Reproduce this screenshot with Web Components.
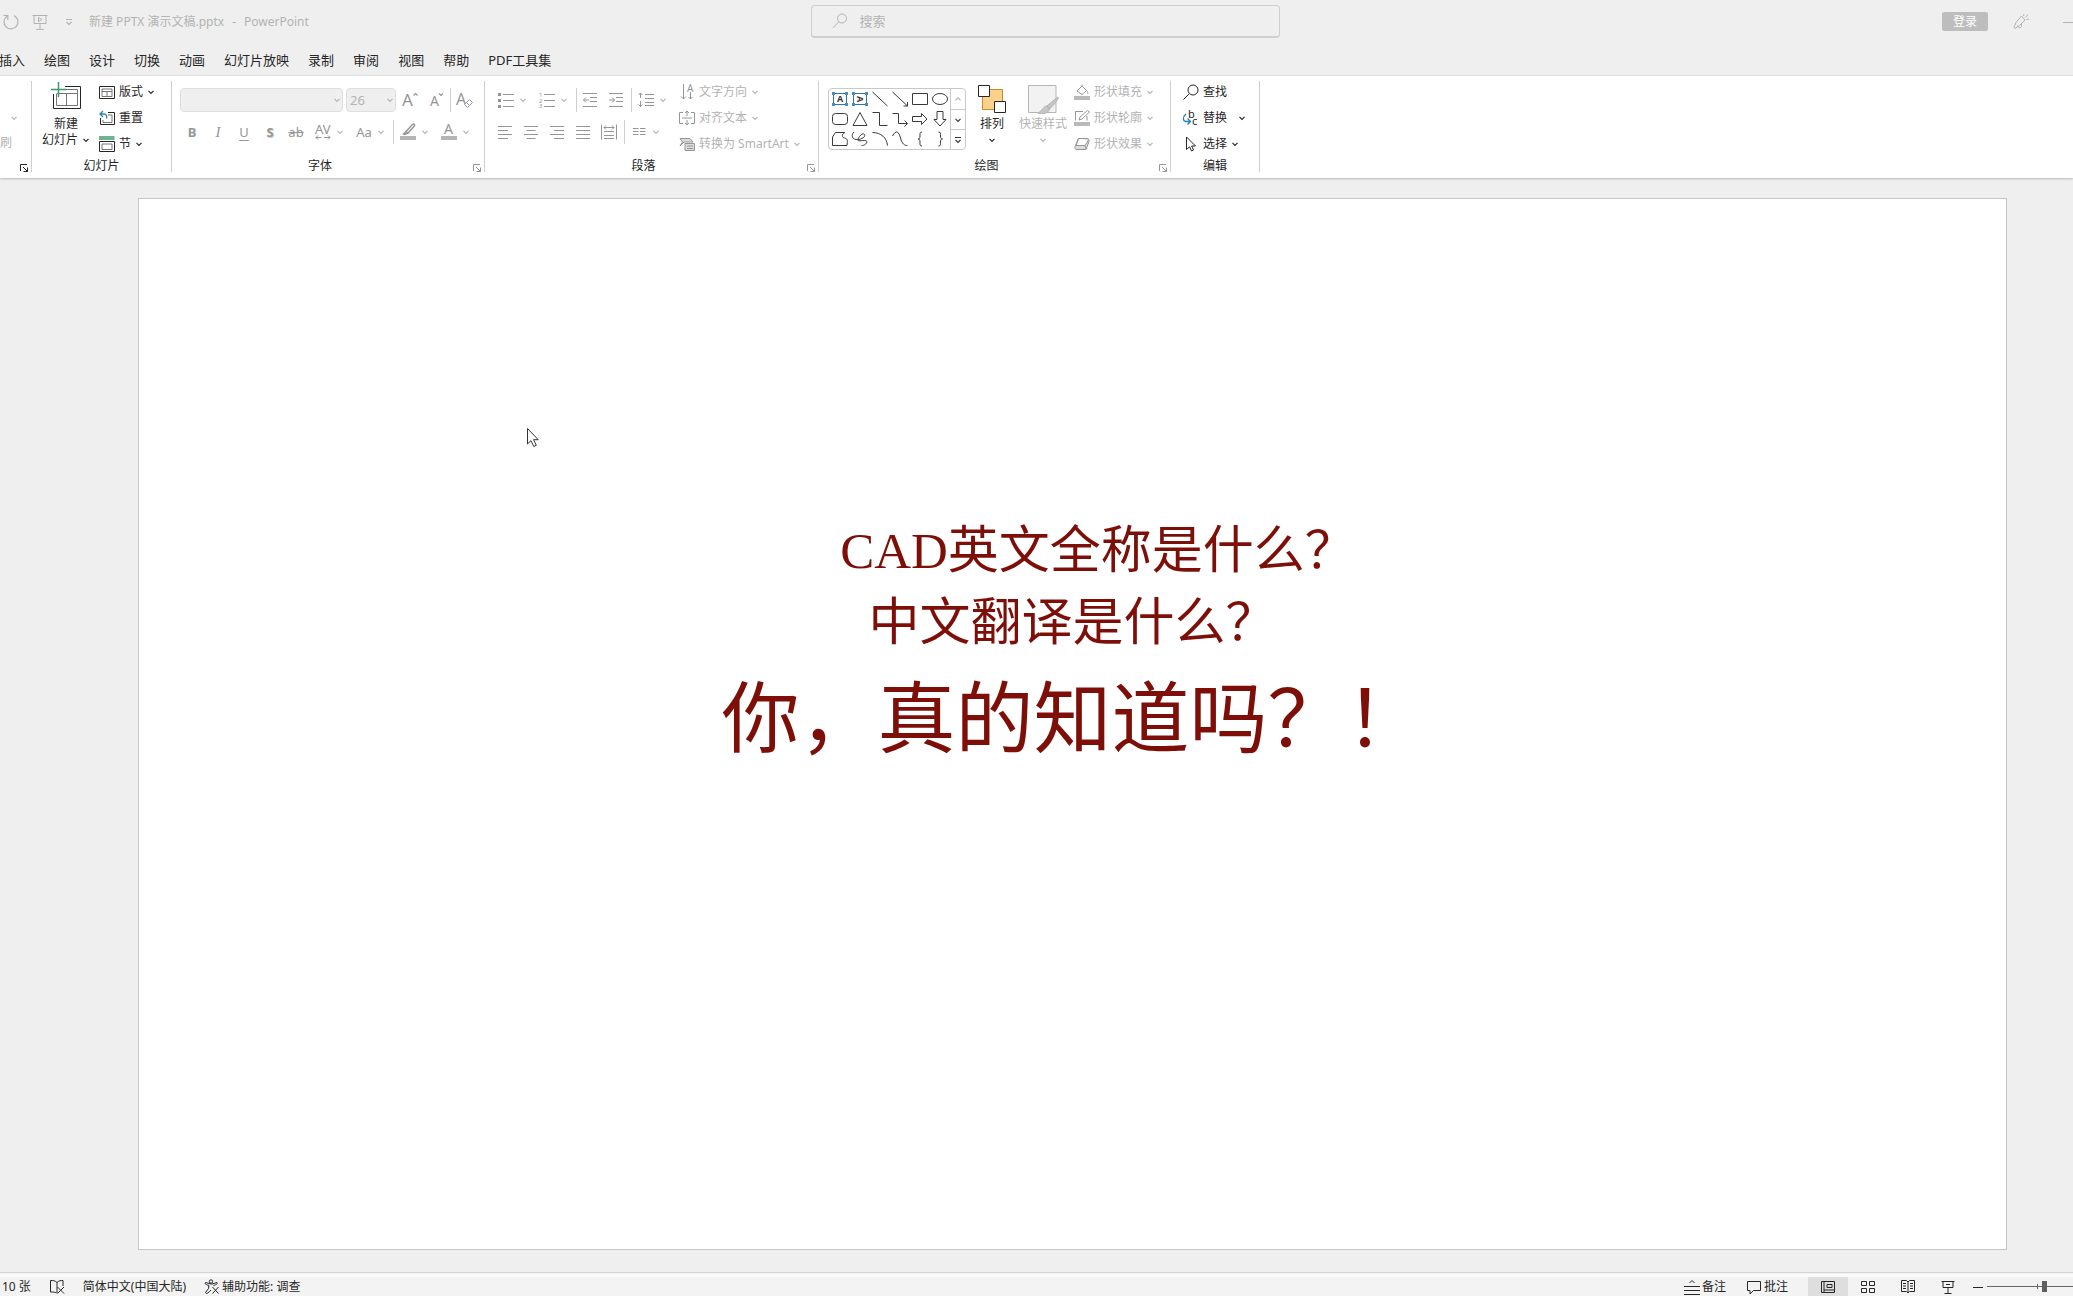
<!DOCTYPE html>
<html lang="zh-CN">
<head>
<meta charset="utf-8">
<meta name="viewport" content="width=device-width, initial-scale=1">
<title>新建 PPTX 演示文稿.pptx - PowerPoint</title>
<style>
  html, body { margin: 0; height: 100%; overflow: hidden; }
  body {
    --ink: #262626;
    --dim: #b3b3b3;
    --mute: #969696;
    --chrome: #efefef;
    font: 12px/16px "Noto Sans", "Noto Sans CJK SC", sans-serif;
    color: var(--ink);
    background: var(--chrome);
  }
</style>
</head>
<body>
<ppt-app></ppt-app>
<script>
/* Icon drawings: [viewBox width, viewBox height, markup] */
const ICONS = {
  chevron: [8, 8, '<path d="M1.5 2.8 4 5.3 6.5 2.8" stroke-width="1.2"/>'],
  up: [8, 8, '<path d="M1.5 5.3 4 2.8 6.5 5.3" stroke-width="1.2"/>'],
  more: [10, 10, '<path d="M2 2.5H8M2.5 5 5 7.5 7.5 5" stroke-width="1.2"/>'],
  redo: [18, 18, '<path d="M12 2.6A7 7 0 1 1 5 3.2M1.5 2.5H5.8V7" stroke-width="1.2"/>'],
  present: [16, 16, '<path d="M.5 1.5H15.5M2 1.5V9.5H14V1.5M8 9.5V15M4 15.4H12"/><path d="M6.5 3.5 10 5.5 6.5 7.5Z"/>'],
  search: [16, 16, '<circle cx="10" cy="5.5" r="4.5"/><path d="M6.8 8.8 1 14.8"/>'],
  pen: [18, 18, '<path d="M9.5 3 13 7 7.5 12.5 3 15.5 2 14.5 4 9.5ZM5.5 12.5C7 16 10 15.5 9.5 11M11.5 3 12 1M13.5 4.5 16 1.5M14.5 6.5 17 6"/>'],
  minus: [10, 10, '<path d="M0 5.5H10"/>'],
  launcher: [10, 10, '<path d="M1.5 8V1.5H8M4 4 8.5 8.5M8.5 4.5V8.5H4.5"/>'],
  newslide: [32, 32, '<path d="M15 4.5H30.5V26.5H3.5V12"/><path d="M15 7.5H27.5V23.5H6.5V12M6.5 11.5H27.5M16.5 11.5V23.5" stroke="#767676"/><path d="M8.5 0V15M1 7.5H16" stroke="#3e9b6e" stroke-width="1.5"/>'],
  layout: [16, 16, '<path d="M.5 2.5H15.5V14.5H.5Z"/><path d="M3 5H13V12.5H3ZM3 7.5H13M8 7.5V12.5" stroke="#767676"/>'],
  reset: [16, 16, '<path d="M9 2.5H15.5V14.5H1.5V8"/><path d="M9 5H13V12.5H4V10" stroke="#767676"/><path d="M4 1 1 4 4 7M1 4H5C7.5 4 8 6 7.5 8.5" stroke="#2f83b4" stroke-width="1.3"/>'],
  section: [16, 16, '<path d="M0 1H15.5M0 3H15.5" stroke="#3e9b6e" stroke-width="1.3"/><path d="M.5 5.5H15.5V15.5H.5Z"/><path d="M3 8H13V13.5H3Z" stroke="#767676"/>'],
  grow: [18, 18, '<text x="2" y="15" font-size="17">A</text><path d="M13.5 4.5 15.5 2.5 17.5 4.5" stroke-width="1.2"/>'],
  shrink: [18, 18, '<text x="4" y="15" font-size="14">A</text><path d="M13 2.5 15 4.5 17 2.5" stroke-width="1.2"/>'],
  clear: [18, 18, '<text x="1" y="14" font-size="16">A</text><path d="M9.5 13.5 14.5 8.5 17.5 11.5 12.5 16.5ZM11.5 11.5 14.5 14.5" fill="#fff"/>'],
  spacing: [16, 18, '<text x="0" y="11" font-size="13">AV</text><path d="M1 14.5H6.5M3 12.5 1 14.5 3 16.5M9 14.5H15M13 12.5 15 14.5 13 16.5"/>'],
  marker: [16, 18, '<path d="M6 8.5 12.5 1.5C14 .5 15.500 2 14 3.500L8 10ZM6 8.500 8 10 4.500 11.500 3.500 11Z" stroke-width="1.5"/><path d="M0 15H16" stroke-width="4" stroke="#b5b5b5"/>'],
  fontcolor: [16, 18, '<text x="3" y="11" font-size="14">A</text><path d="M0 15H16" stroke-width="4" stroke="#b5b5b5"/>'],
  bullets: [16, 16, '<path d="M0 2.5H3M0 8.5H3M0 14.5H3" stroke-width="3"/><path d="M5 2.5H16M5 8.5H16M5 14.5H16"/>'],
  numbers: [16, 16, '<g font-size="6"><text x="0" y="4.5">1</text><text x="0" y="10.5">2</text><text x="0" y="16">3</text></g><path d="M5 2.5H16M5 8.5H16M5 14.5H16"/>'],
  outdent: [16, 16, '<path d="M1 1.5H15M8 5.5H15M8 9.5H15M1 14.5H15M1.5 8H7M4 5.5 1.5 8 4 10.5"/>'],
  indent: [16, 16, '<path d="M1 1.5H15M8 5.5H15M8 9.5H15M1 14.5H15M1 8H6.5M4 5.5 6.5 8 4 10.5"/>'],
  linegap: [16, 16, '<path d="M7 2.5H16M7 6.5H16M7 10.5H16M7 13.5H16M2.5 1V6M.5 3 2.5 1 4.5 3M2.5 9V14.5M.5 12.5 2.5 14.5 4.5 12.5"/>'],
  left: [16, 16, '<path d="M1 2.5H15M1 6.5H11M1 10.5H15M1 14.5H11"/>'],
  center: [16, 16, '<path d="M1 2.5H15M3.5 6.5H12.5M1 10.5H15M3.5 14.5H12.5"/>'],
  right: [16, 16, '<path d="M1 2.5H15M5 6.5H15M1 10.5H15M5 14.5H15"/>'],
  justify: [16, 16, '<path d="M1 2.5H15M1 6.5H15M1 10.5H15M1 14.5H15"/>'],
  distribute: [16, 16, '<path d="M.5 .5V15.5M15.5 .5V15.5M3 7.5H13M3 11.5H13M3 14.5H13M3 3.5H13M5 1.5 3 3.5 5 5.5M11 1.5 13 3.5 11 5.5"/>'],
  columns: [16, 16, '<path d="M2 4.5H7.5M9 4.5H14.5M2 7.5H7.5M9 7.5H14.5M2 10.5H7.5M9 10.5H14.5"/>'],
  direction: [16, 16, '<path d="M4.5 0V15M2 12.5 4.5 15 7 12.5M11.5 8V15M9.5 13 11.5 15 13.5 13"/><text x="8" y="8" font-size="10">A</text>'],
  aligntext: [16, 16, '<path d="M4 2.5H.5V13.5H4M12 2.5H15.5V13.5H12M3 8H13M8 1V6M6 3 8 1 10 3M8 10V15M6 13 8 15 10 13"/>'],
  smartart: [16, 16, '<path d="M1 2.5H11L14 6H5L1 10 3.5 6ZM6 7.5H15.5V14.5H6ZM8 10H14M8 12.5H14" fill="#ddd"/>'],
  tbox: [16, 16, '<path d="M1.5 2.5H14.5V13.5H1.5Z" stroke="#2e75a8"/><path d="M0 1h3v3H0ZM13 1h3v3H13ZM0 12h3v3H0ZM13 12h3v3H13Z" fill="#4d8cb8" stroke="none"/><text x="5" y="11" font-size="9" font-weight="700" fill="#2e75a8">A</text>'],
  vbox: [16, 16, '<path d="M1.5 2.5H14.5V13.5H1.5Z" stroke="#2e75a8"/><path d="M0 1h3v3H0ZM13 1h3v3H13ZM0 12h3v3H0ZM13 12h3v3H13Z" fill="#4d8cb8" stroke="none"/><text x="5" y="11" font-size="9" font-weight="700" fill="#2e75a8" transform="rotate(90 8 8)">A</text>'],
  line: [16, 16, '<path d="M.5 1 15.5 15"/>'],
  arrow: [16, 16, '<path d="M.5 1 15.5 15M15.5 11V15H11.5"/>'],
  rect: [16, 16, '<path d="M.5 2.5H15.5V13.5H.5Z"/>'],
  ellipse: [16, 16, '<ellipse cx="8" cy="8" rx="7.5" ry="5.5"/>'],
  round: [16, 16, '<rect x=".5" y="2.5" width="15" height="11" rx="3"/>'],
  triangle: [16, 16, '<path d="M8 1.5 15 14.5H1Z"/>'],
  elbow: [16, 16, '<path d="M.5 1.5H7.5V14.5H15.5"/>'],
  elbowarrow: [16, 16, '<path d="M.5 2.5H6.5V12.5H15.5M12.5 9.5 15.5 12.5 12.5 15.5"/>'],
  rarrow: [16, 16, '<path d="M.5 5.5H9.5V2.5L15 8 9.5 13.5V10.5H.5Z"/>'],
  darrow: [16, 16, '<path d="M5 .5H11V8.5H14L8 15 2 8.5H5Z"/>'],
  freeform: [16, 16, '<path d="M3.5 1.5H13C9 3 10 6.5 12.5 7 16 7.5 15.5 10 15 14.5H.5V6Z"/>'],
  scribble: [16, 16, '<path d="M2 1C-1 4 0 8 4 8.5 9 9 14 6 12.5 3.5 11 1 6 6 6 9 6 11 12 8.5 14.5 10 16 12 12 15 9.5 14.5"/>'],
  arc: [16, 16, '<path d="M.5 1.5C9 1.5 15 7 15.5 14.5"/>'],
  curve: [16, 16, '<path d="M.5 5C4-2 7 1 8.5 7 10 13 12.5 14.5 15.5 14.5"/>'],
  lbrace: [16, 16, '<path d="M10 1C7.5 1 8 3 8 5 8 7 7.5 8 6 8 7.5 8 8 9 8 11 8 13 7.5 15 10 15"/>'],
  rbrace: [16, 16, '<path d="M6.5 1C9 1 8.5 3 8.5 5 8.5 7 9 8 10.5 8 9 8 8.5 9 8.5 11 8.5 13 9 15 6.5 15"/>'],
  arrange: [32, 32, '<path d="M6.5 7.5H26.5V27.5H6.5Z" fill="#fbd18c" stroke="#c98a2c"/><path d="M2.5 3.5H13.5V14.5H2.5ZM18.5 19.5H29.5V30.5H18.5Z" fill="#fff"/>'],
  styles: [32, 32, '<path d="M1.5 3.5H29V30.5H1.5Z" fill="#f2f2f2" stroke="#b5b5b5"/><path d="M30.5 15 20 24 22.5 27C26 24 30 19 31.5 16ZM20 24C16 24 16 29 10.5 31 16 32.5 22 31 22.5 27Z" fill="#c6c6c6"/>'],
  fill: [16, 16, '<path d="M3 7 8 2 12.5 6.5 8 10.5ZM8 2V.5M12.5 6.5C14 8 14 9.5 13.5 10"/><path d="M0 14H16" stroke-width="4" stroke="#b9b9b9"/>'],
  outline: [16, 16, '<path d="M9 1.5H1.5V10.5M13 6V10.5M5 10 6 7 13.5 .5 15.5 2 8 9Z"/><path d="M0 14H16" stroke-width="4" stroke="#b9b9b9"/>'],
  effect: [16, 16, '<path d="M4.5 2.5H13C15 2.5 15.5 4 15 5.5L12 13.5H3C1 13.5 .5 12 1 10.5ZM4.5 2.5 2 9.5H11L14.5 4M11 9.5 12 13" fill="#dcdcdc"/>'],
  find: [16, 16, '<circle cx="10" cy="6" r="5"/><path d="M6.5 9.5 .5 15.5"/>'],
  replace: [16, 16, '<text x="5" y="8" font-size="11" fill="#b04aa0">b</text><text x="9" y="15" font-size="11" fill="#2a7fb8">c</text><path d="M3 4C-.5 7-.5 11 3 11.5H7M4.500 8.500 7.500 11.500 4.500 14.500" stroke="#2a7fb8" stroke-width="1.3"/>'],
  select: [16, 16, '<path d="M3.5 1V13.5L6.5 10.8 8.5 15 10.5 14 8.6 10H12.5Z"/>'],
  proof: [16, 16, '<path d="M8 3.5V14M8 3.5C6 1.5 4 1.5 1.5 1.5V13C4 13 6 13 7.5 14M8 3.5C10 1.5 12 1.5 14 1.5V7M8.5 8 15 14.5M15 8 8.5 14.5"/>'],
  access: [16, 16, '<circle cx="7" cy="2.5" r="1.7"/><path d="M7 5 1.5 3.5M1.5 3.5C0 5 3 6 5 6.5L4.5 9.5 1.5 13.5C2 15 3.5 15 7 11M7 5H8L13 3.5C14 5.5 11 6 9.5 6.5M8.5 8 14.5 14.5M14.5 8 8.5 14.5"/>'],
  notes: [16, 16, '<path d="M0 7.5H16M0 11.5H16M0 15.5H16M5.5 4 8 1.5 10.5 4"/>'],
  comment: [16, 16, '<path d="M1.5 2.5H14.5V11.5H7.5L4 15V11.5H1.5Z"/>'],
  normal: [16, 16, '<path d="M1.5 2.5H14.5V13.5H1.5ZM4 2.5V13.5M4 11H14.5M7 5.5H12V8.5H7Z"/>'],
  sorter: [16, 16, '<path d="M1.5 2.5H6.5V6.5H1.5ZM9.5 2.5H14.5V6.5H9.5ZM1.5 9.5H6.5V13.5H1.5ZM9.5 9.5H14.5V13.5H9.5Z"/>'],
  reading: [16, 16, '<path d="M8 3 6.5 1.5H1.5V12.5H6.5L8 14 9.5 12.5H14.5V1.5H9.5ZM8 3V14M3 4.5H6M3 7H6M3 9.5H6M10 4.5H13M10 7H13M10 9.5H13"/>'],
  show: [16, 16, '<path d="M1.5 2.5H14.5M3 2.5V8.5H13V2.5M8 8.5V14.5M4.5 14.5H11.5M6 5.5H10"/>'],
  cursor: [14, 22, '<path d="M1.5 1.5V17L5 13.7 7.8 19.5 10.3 18.3 7.6 12.7H12.2Z" fill="#fff" stroke="#333"/>']
};

/* Base: every element renders its own template into an open shadow root. */
class Part extends HTMLElement {
  connectedCallback() {
    if (this.shadowRoot) return;
    const t = document.createElement('template');
    t.innerHTML = `<style>*{box-sizing:border-box}button,select,input{font:inherit;color:inherit;margin:0;padding:0;border:0;background:none}${this.css()}</style>${this.html()}`;
    this.attachShadow({ mode: 'open' }).append(t.content.cloneNode(true));
  }
  css() { return ''; }
  html() { return '<slot></slot>'; }
}

customElements.define('ui-icon', class extends Part {
  css() {
    const [w, h] = ICONS[this.getAttribute('name')];
    return `:host{display:block;flex:none;width:${w}px;height:${h}px}svg{display:block;overflow:visible;fill:none;stroke:currentColor}text{fill:currentColor;stroke:none}`;
  }
  html() {
    const [w, h, d] = ICONS[this.getAttribute('name')];
    return `<svg width="${w}" height="${h}" viewBox="0 0 ${w} ${h}" aria-hidden="true">${d}</svg>`;
  }
});

const icon = n => `<ui-icon name="${n}"></ui-icon>`;

/* Icon-only ribbon button; "menu" adds a drop-down arrow. */
customElements.define('icon-button', class extends Part {
  css() { return `:host{display:block;flex:none;color:var(--mute)}
    button{display:flex;align-items:center;justify-content:center;width:26px;height:24px}
    .menu{width:41px;justify-content:flex-start;gap:5px;padding:0 6px}
    .face{display:flex;justify-content:center;width:16px}
    .menu ui-icon[name=chevron]{color:var(--dim)}`; }
  html() {
    const n = this.getAttribute('icon'), m = this.hasAttribute('menu');
    return `<button type="button" class="${m ? 'menu' : ''}" aria-label="${this.getAttribute('label') || ''}">${m ? '<span class="face">' : ''}${n ? icon(n) : '<slot></slot>'}${m ? '</span>' + icon('chevron') : ''}</button>`;
  }
});

/* One-line ribbon command: icon, label, optional arrow. */
customElements.define('row-button', class extends Part {
  css() { return `:host{display:block}:host([off]){color:var(--dim)}:host([off]) ui-icon{color:var(--mute)}:host([off]) ui-icon[name=chevron]{color:var(--dim)}
    button{display:flex;align-items:center;gap:4px;height:26px;padding:0 6px;white-space:nowrap}
    :host([split]) ui-icon[name=chevron]{margin-left:7px}`; }
  html() { return `<button type="button">${icon(this.getAttribute('icon'))}<span><slot></slot></span>${this.hasAttribute('menu') ? icon('chevron') : ''}</button>`; }
});

/* Tall ribbon command with a large icon. */
customElements.define('big-button', class extends Part {
  css() { return `:host{display:block;flex:none}:host([off]){color:var(--dim)}
    button{display:flex;flex-direction:column;align-items:center;width:100%;padding-top:3px;white-space:nowrap}
    span{display:flex;align-items:center;justify-content:center;gap:4px;height:16px}
    .a{margin-top:2px}`; }
  html() { return `<button type="button">${icon(this.getAttribute('icon'))}<span class="a"><slot></slot></span><span><slot name="second"></slot>${icon('chevron')}</span></button>`; }
});

customElements.define('ribbon-group', class extends Part {
  css() { return `:host{display:flex;flex-direction:column;flex:none;padding:3px 1px 0 0;background:linear-gradient(#cfcfcf,#cfcfcf) no-repeat right 5px/1px calc(100% - 11px)}
    .body{display:flex;height:77px}
    footer{display:flex;align-items:center;height:20px}
    h2{flex:1;margin:0;font-size:12px;font-weight:400;line-height:20px;text-align:center}
    button{width:16px;height:16px;padding:4px 0 0 4px;color:var(--launch,var(--mute))}`; }
  html() { return `<div class="body"><slot></slot></div><footer><h2>${this.getAttribute('label') || ''}</h2>${this.hasAttribute('launcher') ? `<button type="button" aria-label="更多选项">${icon('launcher')}</button>` : ''}</footer>`; }
});

customElements.define('title-bar', class extends Part {
  css() { return `:host{display:flex;align-items:center;height:43px;color:var(--dim)}
    .left{flex:1 1 17px;display:flex;align-items:center;min-width:0;padding-left:2px}
    .left button{display:block}
    .left button+button{margin-left:12px}
    .left button.q{margin-left:16px}
    h1{display:flex;gap:8px;margin:0 0 0 15px;font:inherit;white-space:nowrap}
    label{display:flex;align-items:center;gap:12px;flex:0 1 469px;height:33px;padding:0 20px;border:1px solid #cecece;border-bottom-width:2px;border-radius:4px;font-size:13px}
    input{flex:1;min-width:0;outline:0}input::placeholder{color:#b3b3b3;opacity:1}
    .right{flex:1 1 0;display:flex;align-items:center;justify-content:flex-end}
    .login{width:46px;height:19px;border-radius:2px;background:#bdbdbd;color:#fff;line-height:19px}
    .right button+button{margin-left:24px}.right button.min{margin-left:33px}`; }
  html() { return `<div class="left"><button aria-label="恢复">${icon('redo')}</button><button aria-label="从头开始">${icon('present')}</button><button class="q" aria-label="自定义">${icon('more')}</button><h1><span>新建 PPTX 演示文稿.pptx</span><span>-</span><span>PowerPoint</span></h1></div>
    <label>${icon('search')}<input type="search" placeholder="搜索" aria-label="搜索"></label>
    <div class="right"><button class="login">登录</button><button aria-label="墨迹">${icon('pen')}</button><button class="min" aria-label="最小化">${icon('minus')}</button></div>`; }
});

customElements.define('menu-tabs', class extends Part {
  css() { return `:host{display:flex;gap:19px;height:32px;margin-left:-1px;padding-top:4px;align-items:flex-start;font-size:13px}
    button{height:26px;line-height:26px;white-space:nowrap}`; }
  html() { return ['插入', '绘图', '设计', '切换', '动画', '幻灯片放映', '录制', '审阅', '视图', '帮助', 'PDF工具集'].map(t => `<button type="button">${t}</button>`).join(''); }
});

customElements.define('shape-gallery', class extends Part {
  css() { return `:host{display:flex;flex:none;margin-top:9px;height:62px;border:1px solid #c9c9c9;border-radius:4px;color:#3a3a3a}
    .cells{display:grid;grid-template-columns:repeat(6,20px);grid-auto-rows:20px;padding-left:1px}
    .cells button{display:grid;place-items:center}
    .nav{display:grid;grid-template-rows:repeat(3,20px);width:15px;border-left:1px solid #c9c9c9}
    .nav button{display:grid;place-items:center}.nav button+button{border-top:1px solid #c9c9c9}
    .nav button:first-child{color:var(--dim)}`; }
  html() {
    const names = 'tbox vbox line arrow rect ellipse round triangle elbow elbowarrow rarrow darrow freeform scribble arc curve lbrace rbrace'.split(' ');
    return `<div class="cells">${names.map(n => `<button type="button" aria-label="形状">${icon(n)}</button>`).join('')}</div>
    <div class="nav"><button aria-label="向上">${icon('up')}</button><button aria-label="向下">${icon('chevron')}</button><button aria-label="其他">${icon('more')}</button></div>`;
  }
});

customElements.define('ribbon-bar', class extends Part {
  css() { return `:host{display:flex;height:103px;background:#fff;border-top:1px solid #e2e2e2;box-shadow:0 1px 2px #b8b8b8;position:relative}
    .clip{width:32px;--launch:var(--ink)}.clip div{display:flex;flex-direction:column;width:100%;color:var(--dim)}
    .clip button{display:block;height:26px;text-align:left}
    .clip .m{margin-top:26px;padding-left:10px}
    .slides{width:140px}.slides big-button{width:54px;margin-left:7px}
    .font{width:313px}.para{width:334px}.draw{width:352px}.edit{width:89px}
    .rows{padding:5px 0 0 7px}.rows>div{display:flex;align-items:center;height:32px}
    i.sep{width:1px;height:24px;margin-left:2px;background:#cfcfcf}
    select{appearance:none;height:24px;border:1px solid #dedede;border-radius:4px;background:var(--chrome);padding:0 3px;color:var(--dim);font-size:13px;width:100%;opacity:1}
    .combo{display:grid;align-items:center;width:163px;margin-left:1px;color:var(--dim)}
    .combo.s{width:50px;margin-left:3px}
    .combo>*{grid-area:1/1}.combo ui-icon{justify-self:end;margin-right:2px;pointer-events:none}
    b{font-size:13px}em{font:italic 15px "Liberation Serif",serif}u{font-size:13px;text-underline-offset:3px}s{font-size:13px}
    .sh{text-shadow:1px 1px 1px #ccc}.aa{font-size:13px}
    shape-gallery{margin-left:9px}
    .arr{width:52px}.sty{width:50px}
    .edit .col{padding-left:6px}`; }
  html() { const I = (n, l, m) => `<icon-button icon="${n}" label="${l}" ${m ? 'menu' : ''}></icon-button>`, S = '<i class="sep"></i>';
    return `
    <ribbon-group class="clip" launcher><div><button class="m" aria-label="复制">${icon('chevron')}</button><button>刷</button></div></ribbon-group>
    <ribbon-group class="slides" label="幻灯片">
      <big-button icon="newslide">新建<span slot="second">幻灯片</span></big-button>
      <div><row-button icon="layout" menu>版式</row-button><row-button icon="reset">重置</row-button><row-button icon="section" menu>节</row-button></div>
    </ribbon-group>
    <ribbon-group class="font" label="字体" launcher><div class="rows">
      <div><span class="combo"><select aria-label="字体" disabled><option></option></select>${icon('chevron')}</span><span class="combo s"><select aria-label="字号" disabled><option>26</option></select>${icon('chevron')}</span>${I('grow', '增大字号')}${I('shrink', '减小字号')}${S}${I('clear', '清除格式')}</div>
      <div><icon-button label="加粗"><b>B</b></icon-button><icon-button label="倾斜"><em>I</em></icon-button><icon-button label="下划线"><u>U</u></icon-button><icon-button label="阴影"><b class="sh">S</b></icon-button><icon-button label="删除线"><s>ab</s></icon-button>${I('spacing', '字符间距', 1)}<icon-button menu label="大小写"><span class="aa">Aa</span></icon-button>${S}${I('marker', '突出显示', 1)}${I('fontcolor', '字体颜色', 1)}</div>
    </div></ribbon-group>
    <ribbon-group class="para" label="段落" launcher><div class="rows">
      <div>${I('bullets', '项目符号', 1)}${I('numbers', '编号', 1)}${S}${I('outdent', '减少缩进')}${I('indent', '增加缩进')}${S}${I('linegap', '行距', 1)}</div>
      <div>${I('left', '左对齐')}${I('center', '居中')}${I('right', '右对齐')}${I('justify', '两端对齐')}${I('distribute', '分散对齐')}${S}${I('columns', '分栏', 1)}</div>
    </div><div><row-button off icon="direction" menu>文字方向</row-button><row-button off icon="aligntext" menu>对齐文本</row-button><row-button off icon="smartart" menu>转换为 SmartArt</row-button></div></ribbon-group>
    <ribbon-group class="draw" label="绘图" launcher>
      <shape-gallery></shape-gallery><big-button class="arr" icon="arrange">排列</big-button><big-button class="sty" off icon="styles">快速样式</big-button>
      <div><row-button off icon="fill" menu>形状填充</row-button><row-button off icon="outline" menu>形状轮廓</row-button><row-button off icon="effect" menu>形状效果</row-button></div>
    </ribbon-group>
    <ribbon-group class="edit" label="编辑"><div class="col"><row-button icon="find">查找</row-button><row-button icon="replace" menu split>替换</row-button><row-button icon="select" menu>选择</row-button></div></ribbon-group>`; }
});

customElements.define('slide-canvas', class extends Part {
  css() { return `:host{display:flex;flex:1;min-height:0;padding:20px 66px 22px 138px}
    article{flex:1;display:flex;flex-direction:column;align-items:center;justify-content:center;padding-bottom:150px;background:#fff;border:1px solid #c6c6c6;color:#7d0f08;
      font:51px/72px "Liberation Serif","Noto Sans CJK SC",serif;font-kerning:none}
    p{margin:0;white-space:pre}
    .big{font-size:78px;line-height:124px}
    ui-icon{position:absolute;left:526px;top:427px}`; }
  html() { return `<article><p>    CAD英文全称是什么？</p><p>中文翻译是什么？</p><p class="big">你，真的知道吗？！</p></article>${icon('cursor')}`; }
});

customElements.define('status-bar', class extends Part {
  css() { return `:host{display:flex;align-items:center;justify-content:space-between;height:24px;padding-top:4px;overflow:hidden;background:linear-gradient(#fafafa,#fafafa) no-repeat 0 1px/100% 3px #f3f3f3;border-top:1px solid #d4d4d4;box-sizing:border-box}
    div{display:flex;align-items:center;height:20px}
    .l{padding-left:2px}
    button{display:flex;align-items:center;justify-content:center;gap:2px;height:20px;white-space:nowrap}
    .l button{margin-left:18px}
    .r{margin-right:-14px}
    .n{margin-right:20px}
    .v{width:40px}.v[aria-pressed=true]{background:#dedede}
    .z{margin:0 4px 0 5px;width:10px}
    input{appearance:none;width:100px;height:16px;background:linear-gradient(#666,#666) no-repeat 50% 50%/1px 5px,linear-gradient(#666,#666) no-repeat 0 50%/100% 1px}
    input::-webkit-slider-thumb{appearance:none;width:5px;height:11px;background:#5e5e5e}`; }
  html() { return `<div class="l"><span>10 张</span><button aria-label="校对">${icon('proof')}</button><button>简体中文(中国大陆)</button><button>${icon('access')}辅助功能: 调查</button></div>
    <div class="r"><button class="n">${icon('notes')}备注</button><button class="n">${icon('comment')}批注</button>
    <button class="v" aria-pressed="true" aria-label="普通">${icon('normal')}</button><button class="v" aria-label="浏览">${icon('sorter')}</button><button class="v" aria-label="阅读">${icon('reading')}</button><button class="v" aria-label="放映">${icon('show')}</button>
    <button class="z" aria-label="缩小">${icon('minus')}</button><input type="range" min="0" max="100" value="58" aria-label="缩放"></div>`; }
});

customElements.define('ppt-app', class extends Part {
  css() { return ':host{display:flex;flex-direction:column;height:100vh}title-bar,menu-tabs,ribbon-bar,status-bar{flex:none}'; }
  html() { return '<title-bar></title-bar><menu-tabs></menu-tabs><ribbon-bar></ribbon-bar><slide-canvas></slide-canvas><status-bar></status-bar>'; }
});
</script>
</body>
</html>
